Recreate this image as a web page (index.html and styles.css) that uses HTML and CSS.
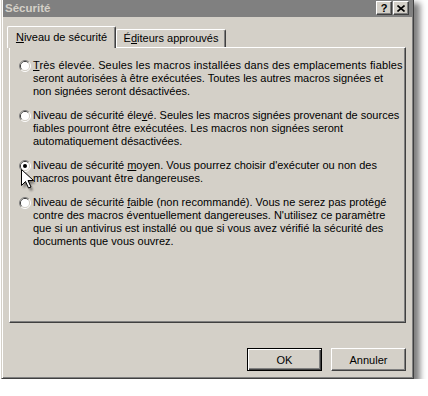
FILE: index.html
```html
<!DOCTYPE html>
<html lang="fr">
<head>
<meta charset="utf-8">
<title>Sécurité</title>
<link rel="stylesheet" href="styles.css">
</head>
<body>
<div class="dialog">
  <div class="titlebar">
    <span class="title">Sécurité</span>
    <div class="tbtns">
      <span class="tbtn help">?</span>
      <span class="tbtn close"><svg width="8" height="7" viewBox="0 0 8 7"><path d="M0.5 0.5 L7.5 6.5 M7.5 0.5 L0.5 6.5" stroke="#000" stroke-width="1.6" fill="none"/></svg></span>
    </div>
  </div>
  <div class="tabs">
    <div class="tab active"><u>N</u>iveau de sécurité</div>
    <div class="tab inactive">É<u>d</u>iteurs approuvés</div>
  </div>
  <div class="panel">
    <div class="opt">
      <svg class="radio" width="12" height="12" viewBox="0 0 12 12"><path d="M9.89 2.11 A5.5 5.5 0 0 0 2.11 9.89" stroke="#808080" fill="none"/><path d="M9.89 2.11 A5.5 5.5 0 0 1 2.11 9.89" stroke="#fff" fill="none"/><path d="M9.18 2.82 A4.5 4.5 0 0 0 2.82 9.18" stroke="#404040" fill="none"/><path d="M9.18 2.82 A4.5 4.5 0 0 1 2.82 9.18" stroke="#d4d0c8" fill="none"/><circle cx="6" cy="6" r="4" fill="#fff"/></svg>
      <div class="label"><span class="wide"><u>T</u>rès élevée. Seules les macros installées dans des emplacements fiables</span><br>seront autorisées à être exécutées. Toutes les autres macros signées et<br>non signées seront désactivées.</div>
    </div>
    <div class="opt">
      <svg class="radio" width="12" height="12" viewBox="0 0 12 12"><path d="M9.89 2.11 A5.5 5.5 0 0 0 2.11 9.89" stroke="#808080" fill="none"/><path d="M9.89 2.11 A5.5 5.5 0 0 1 2.11 9.89" stroke="#fff" fill="none"/><path d="M9.18 2.82 A4.5 4.5 0 0 0 2.82 9.18" stroke="#404040" fill="none"/><path d="M9.18 2.82 A4.5 4.5 0 0 1 2.82 9.18" stroke="#d4d0c8" fill="none"/><circle cx="6" cy="6" r="4" fill="#fff"/></svg>
      <div class="label">Niveau de sécurité éle<u>v</u>é. Seules les macros signées provenant de sources<br>fiables pourront être exécutées. Les macros non signées seront<br>automatiquement désactivées.</div>
    </div>
    <div class="opt">
      <svg class="radio" width="12" height="12" viewBox="0 0 12 12"><path d="M9.89 2.11 A5.5 5.5 0 0 0 2.11 9.89" stroke="#808080" fill="none"/><path d="M9.89 2.11 A5.5 5.5 0 0 1 2.11 9.89" stroke="#fff" fill="none"/><path d="M9.18 2.82 A4.5 4.5 0 0 0 2.82 9.18" stroke="#404040" fill="none"/><path d="M9.18 2.82 A4.5 4.5 0 0 1 2.82 9.18" stroke="#d4d0c8" fill="none"/><circle cx="6" cy="6" r="4" fill="#fff"/><circle cx="6" cy="6" r="2" fill="#000"/></svg>
      <div class="label">Niveau de sécurité <u>m</u>oyen. Vous pourrez choisir d'exécuter ou non des<br>macros pouvant être dangereuses.</div>
    </div>
    <div class="opt">
      <svg class="radio" width="12" height="12" viewBox="0 0 12 12"><path d="M9.89 2.11 A5.5 5.5 0 0 0 2.11 9.89" stroke="#808080" fill="none"/><path d="M9.89 2.11 A5.5 5.5 0 0 1 2.11 9.89" stroke="#fff" fill="none"/><path d="M9.18 2.82 A4.5 4.5 0 0 0 2.82 9.18" stroke="#404040" fill="none"/><path d="M9.18 2.82 A4.5 4.5 0 0 1 2.82 9.18" stroke="#d4d0c8" fill="none"/><circle cx="6" cy="6" r="4" fill="#fff"/></svg>
      <div class="label">Niveau de sécurité <u>f</u>aible (non recommandé). Vous ne serez pas protégé<br>contre des macros éventuellement dangereuses. N'utilisez ce paramètre<br>que si un antivirus est installé ou que si vous avez vérifié la sécurité des<br>documents que vous ouvrez.</div>
    </div>
    <svg class="cursor" width="16" height="24" viewBox="0 0 16 24"><defs><filter id="sh" x="-50%" y="-50%" width="200%" height="200%"><feGaussianBlur stdDeviation="1.2"/></filter></defs><path d="M2.5 3.5 L2.5 19.5 L6.5 15.5 L9.5 22 L12 21 L9 14.5 L14.5 14.5 Z" fill="#000" opacity="0.45" filter="url(#sh)"/><path d="M0.5 0.5 L0.5 16.5 L4.5 12.5 L7.5 19 L10 18 L7 11.5 L12.5 11.5 Z" fill="#fff" stroke="#000" stroke-width="1" stroke-linejoin="miter"/></svg>
  </div>
  <div class="footer">
    <button class="btn default">OK</button>
    <button class="btn">Annuler</button>
  </div>
</div>
</body>
</html>
```
FILE: styles.css
```css
html, body {
  margin: 0;
  padding: 0;
  background: #fff;
}
body {
  font-family: "Liberation Sans", Arial, sans-serif;
  font-size: 11px;
  color: #000;
  overflow: hidden;
}
.dialog {
  box-sizing: border-box;
  width: 413px;
  margin: -3px 0 0 1px;
  padding: 1px 1px 7px 1px;
  background: #d4d0c8;
  border: 1px solid;
  border-color: #d4d0c8 #404040 #404040 #d4d0c8;
  box-shadow: inset 1px 1px #fff, inset -1px -1px #808080, 6px 6px 6px rgba(0, 0, 0, 0.5);
}
.titlebar {
  display: flex;
  align-items: center;
  justify-content: space-between;
  height: 18px;
  background: #808080;
  color: #d4d0c8;
  padding: 0 3px 0 2px;
}
.title {
  font-weight: bold;
  font-size: 11.5px;
  line-height: 18px;
}
.tbtns {
  display: flex;
  gap: 1px;
}
.tbtn {
  box-sizing: border-box;
  width: 16px;
  height: 14px;
  display: flex;
  align-items: center;
  justify-content: center;
  background: #d4d0c8;
  border: 1px solid;
  border-color: #fff #404040 #404040 #fff;
  box-shadow: inset -1px -1px #808080;
  color: #000;
  font-weight: bold;
  font-size: 11px;
  line-height: 12px;
}
.help {
  padding-bottom: 1px;
}
.close svg {
  display: block;
}
.tabs {
  display: flex;
  align-items: flex-end;
  margin: 9px 6px 0 6px;
}
.tab {
  box-sizing: border-box;
  line-height: 13px;
  text-align: center;
  white-space: nowrap;
  border-top: 1px solid #fff;
  border-left: 1px solid #fff;
  border-right: 1px solid #404040;
  box-shadow: inset -1px 0 #808080;
  border-radius: 2px 2px 0 0;
  background: #d4d0c8;
}
.tab.active {
  position: relative;
  z-index: 1;
  width: 109px;
  margin-left: -2px;
  margin-bottom: -1px;
  padding: 4px 0 4px 0;
}
.tab.inactive {
  width: 110px;
  padding: 2px 0 2px 0;
}
.panel {
  position: relative;
  box-sizing: border-box;
  height: 276px;
  margin: 0 6px;
  padding: 11px 9px 0 9px;
  border: 1px solid;
  border-color: #fff #404040 #404040 #fff;
  box-shadow: inset -1px -1px #808080;
  display: flex;
  flex-direction: column;
  gap: 11px;
}
.opt {
  display: flex;
  align-items: flex-start;
  gap: 2px;
}
.radio {
  flex: none;
  margin-top: 1px;
  display: block;
}
.label {
  line-height: 13px;
  white-space: nowrap;
}
.wide {
  letter-spacing: 0.15px;
}
.cursor {
  position: absolute;
  left: 11px;
  top: 121px;
}
.footer {
  display: flex;
  justify-content: flex-end;
  gap: 9px;
  margin: 25px 6px 0 0;
}
.btn {
  box-sizing: border-box;
  width: 75px;
  height: 23px;
  margin: 0;
  padding: 0;
  font-family: "Liberation Sans", Arial, sans-serif;
  font-size: 11px;
  color: #000;
  background: #d4d0c8;
  border: 1px solid;
  border-color: #fff #404040 #404040 #fff;
  box-shadow: inset -1px -1px #808080;
  border-radius: 0;
}
.btn.default {
  border-color: #000;
  box-shadow: inset 1px 1px #fff, inset -1px -1px #404040, inset -2px -2px #808080;
}
```
